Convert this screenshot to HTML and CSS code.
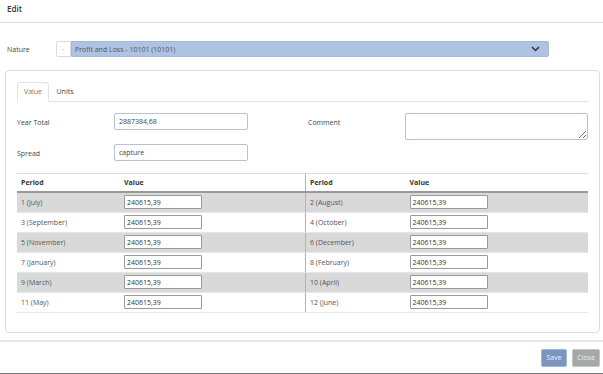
FILE: index.html
```html
<!DOCTYPE html>
<html>
	<head>
		<meta charset="UTF-8">
		<title>Edit</title>
		<link rel="stylesheet" href="styles.css">
	</head>
	<body>
		<div class="header">Edit</div>
		<div class="nature">
			<label class="nature-label">Nature</label>
			<span class="minus">-</span>
			<div class="select">
				<span>Profit and Loss - 10101 (10101)</span>
				<svg width="9" height="6" viewBox="0 0 9 6"><path d="M1 1 L4.5 4.5 L8 1" fill="none" stroke="#333" stroke-width="1.5"/></svg>
			</div>
		</div>
		<div class="panel">
			<div class="tabs">
				<span class="tab active">Value</span>
				<span class="tab">Units</span>
			</div>
			<div class="form">
				<label>Year Total</label>
				<input type="text" value="2887384,68">
				<label>Comment</label>
				<textarea></textarea>
				<label>Spread</label>
				<input type="text" value="capture">
			</div>
			<div class="grid">
				<table>
					<thead>
						<tr><th class="per">Period</th><th>Value</th></tr>
					</thead>
					<tbody>
						<tr><td>1 (July)</td><td><input type="text" value="240615,39"></td></tr>
						<tr><td>3 (September)</td><td><input type="text" value="240615,39"></td></tr>
						<tr><td>5 (November)</td><td><input type="text" value="240615,39"></td></tr>
						<tr><td>7 (January)</td><td><input type="text" value="240615,39"></td></tr>
						<tr><td>9 (March)</td><td><input type="text" value="240615,39"></td></tr>
						<tr><td>11 (May)</td><td><input type="text" value="240615,39"></td></tr>
					</tbody>
				</table>
				<table class="right">
					<thead>
						<tr><th class="per">Period</th><th>Value</th></tr>
					</thead>
					<tbody>
						<tr><td>2 (August)</td><td><input type="text" value="240615,39"></td></tr>
						<tr><td>4 (October)</td><td><input type="text" value="240615,39"></td></tr>
						<tr><td>6 (December)</td><td><input type="text" value="240615,39"></td></tr>
						<tr><td>8 (February)</td><td><input type="text" value="240615,39"></td></tr>
						<tr><td>10 (April)</td><td><input type="text" value="240615,39"></td></tr>
						<tr><td>12 (June)</td><td><input type="text" value="240615,39"></td></tr>
					</tbody>
				</table>
			</div>
		</div>
		<div class="footer">
			<button class="save">Save</button>
			<button class="close">Close</button>
		</div>
	</body>
</html>
```

FILE: styles.css
```css
*{
	margin: 0;
	padding: 0;
	box-sizing: border-box;
}
body{
	width: 603px;
	height: 374px;
	overflow: hidden;
	background: #fff;
	font-family: "Open Sans", "Liberation Sans", sans-serif;
	font-size: 7px;
	color: #444;
}
.header{
	height: 23px;
	padding: 3px 0 0 7px;
	font-size: 8px;
	font-weight: 600;
	color: #333;
	border-bottom: 1px solid #ddd;
}
.nature{
	display: flex;
	align-items: center;
	margin-top: 18px;
	padding-left: 7px;
	height: 16px;
}
.nature-label{
	width: 49px;
}
.minus{
	width: 15px;
	height: 16px;
	border: 1px solid #ddd;
	border-radius: 2px 0 0 2px;
	color: #aaa;
	text-align: center;
	line-height: 13px;
}
.select{
	width: 478px;
	height: 16px;
	background: #adc3e1;
	border: 1px solid #a4b9d6;
	border-radius: 0 2px 2px 0;
	display: flex;
	align-items: center;
	justify-content: space-between;
	padding: 0 8px 0 3px;
	color: #555;
}
.panel{
	margin: 13px 3px 0 5px;
	height: 263px;
	border: 1px solid #ddd;
	border-radius: 4px;
	padding: 11px 11px 0 11px;
}
.tabs{
	display: flex;
	height: 20px;
	border-bottom: 1px solid #e3e3e3;
}
.tab{
	width: 32px;
	text-align: center;
	line-height: 20px;
	color: #444;
}
.tab.active{
	border: 1px solid #e3e3e3;
	border-bottom: 1px solid #fff;
	border-radius: 3px 3px 0 0;
	height: 20px;
	line-height: 18px;
	color: #777;
}
.form{
	display: grid;
	grid-template-columns: 97px 194px 97px 1fr;
	grid-template-rows: 27px 17px;
	row-gap: 4px;
	margin-top: 11px;
}
.form label{
	padding-top: 5px;
	color: #444;
}
.form input{
	width: 134px;
	height: 17px;
	border: 1px solid #b5c3d6;
	border-radius: 2px;
	padding-left: 4px;
	font: inherit;
	color: #444;
}
.form textarea{
	height: 27px;
	border: 1px solid #b5c3d6;
	border-radius: 2px;
}
.grid{
	display: flex;
	margin-top: 12px;
	border-top: 1px solid #ddd;
}
table{
	border-collapse: collapse;
	width: 288px;
}
table.right{
	flex: 1;
	border-left: 1px solid #a8b4c8;
}
th{
	text-align: left;
	font-weight: 700;
	color: #333;
	height: 18px;
	padding-left: 4px;
	border-bottom: 2px solid #999;
}
th.per{
	width: 103px;
}
.right th.per{
	width: 100px;
}
td{
	height: 20px;
	padding-left: 4px;
	border-bottom: 1px solid #e6e6e6;
	color: #555;
}
tbody tr:nth-child(odd) td{
	background: #d9d9d9;
}
td input{
	width: 78px;
	height: 14px;
	border: 1px solid #999;
	border-radius: 1px;
	padding-left: 2px;
	font: inherit;
	color: #333;
	background: #fff;
	display: block;
}
.footer{
	margin-top: 7px;
	border-top: 2px solid #e8e8e8;
	height: 35px;
	display: flex;
	justify-content: flex-end;
	align-items: center;
	gap: 5px;
	padding-right: 3px;
	border-bottom: 2px solid #777;
}
.footer button{
	height: 18px;
	border-radius: 2px;
	font: inherit;
	color: #eef;
}
.save{
	width: 26px;
	background: #7b95bd;
	border: 1px solid #9db6da;
}
.close{
	width: 28px;
	background: #a5a9a5;
	border: 1px solid #c2c5c2;
	color: #f2f2f2;
}
```
